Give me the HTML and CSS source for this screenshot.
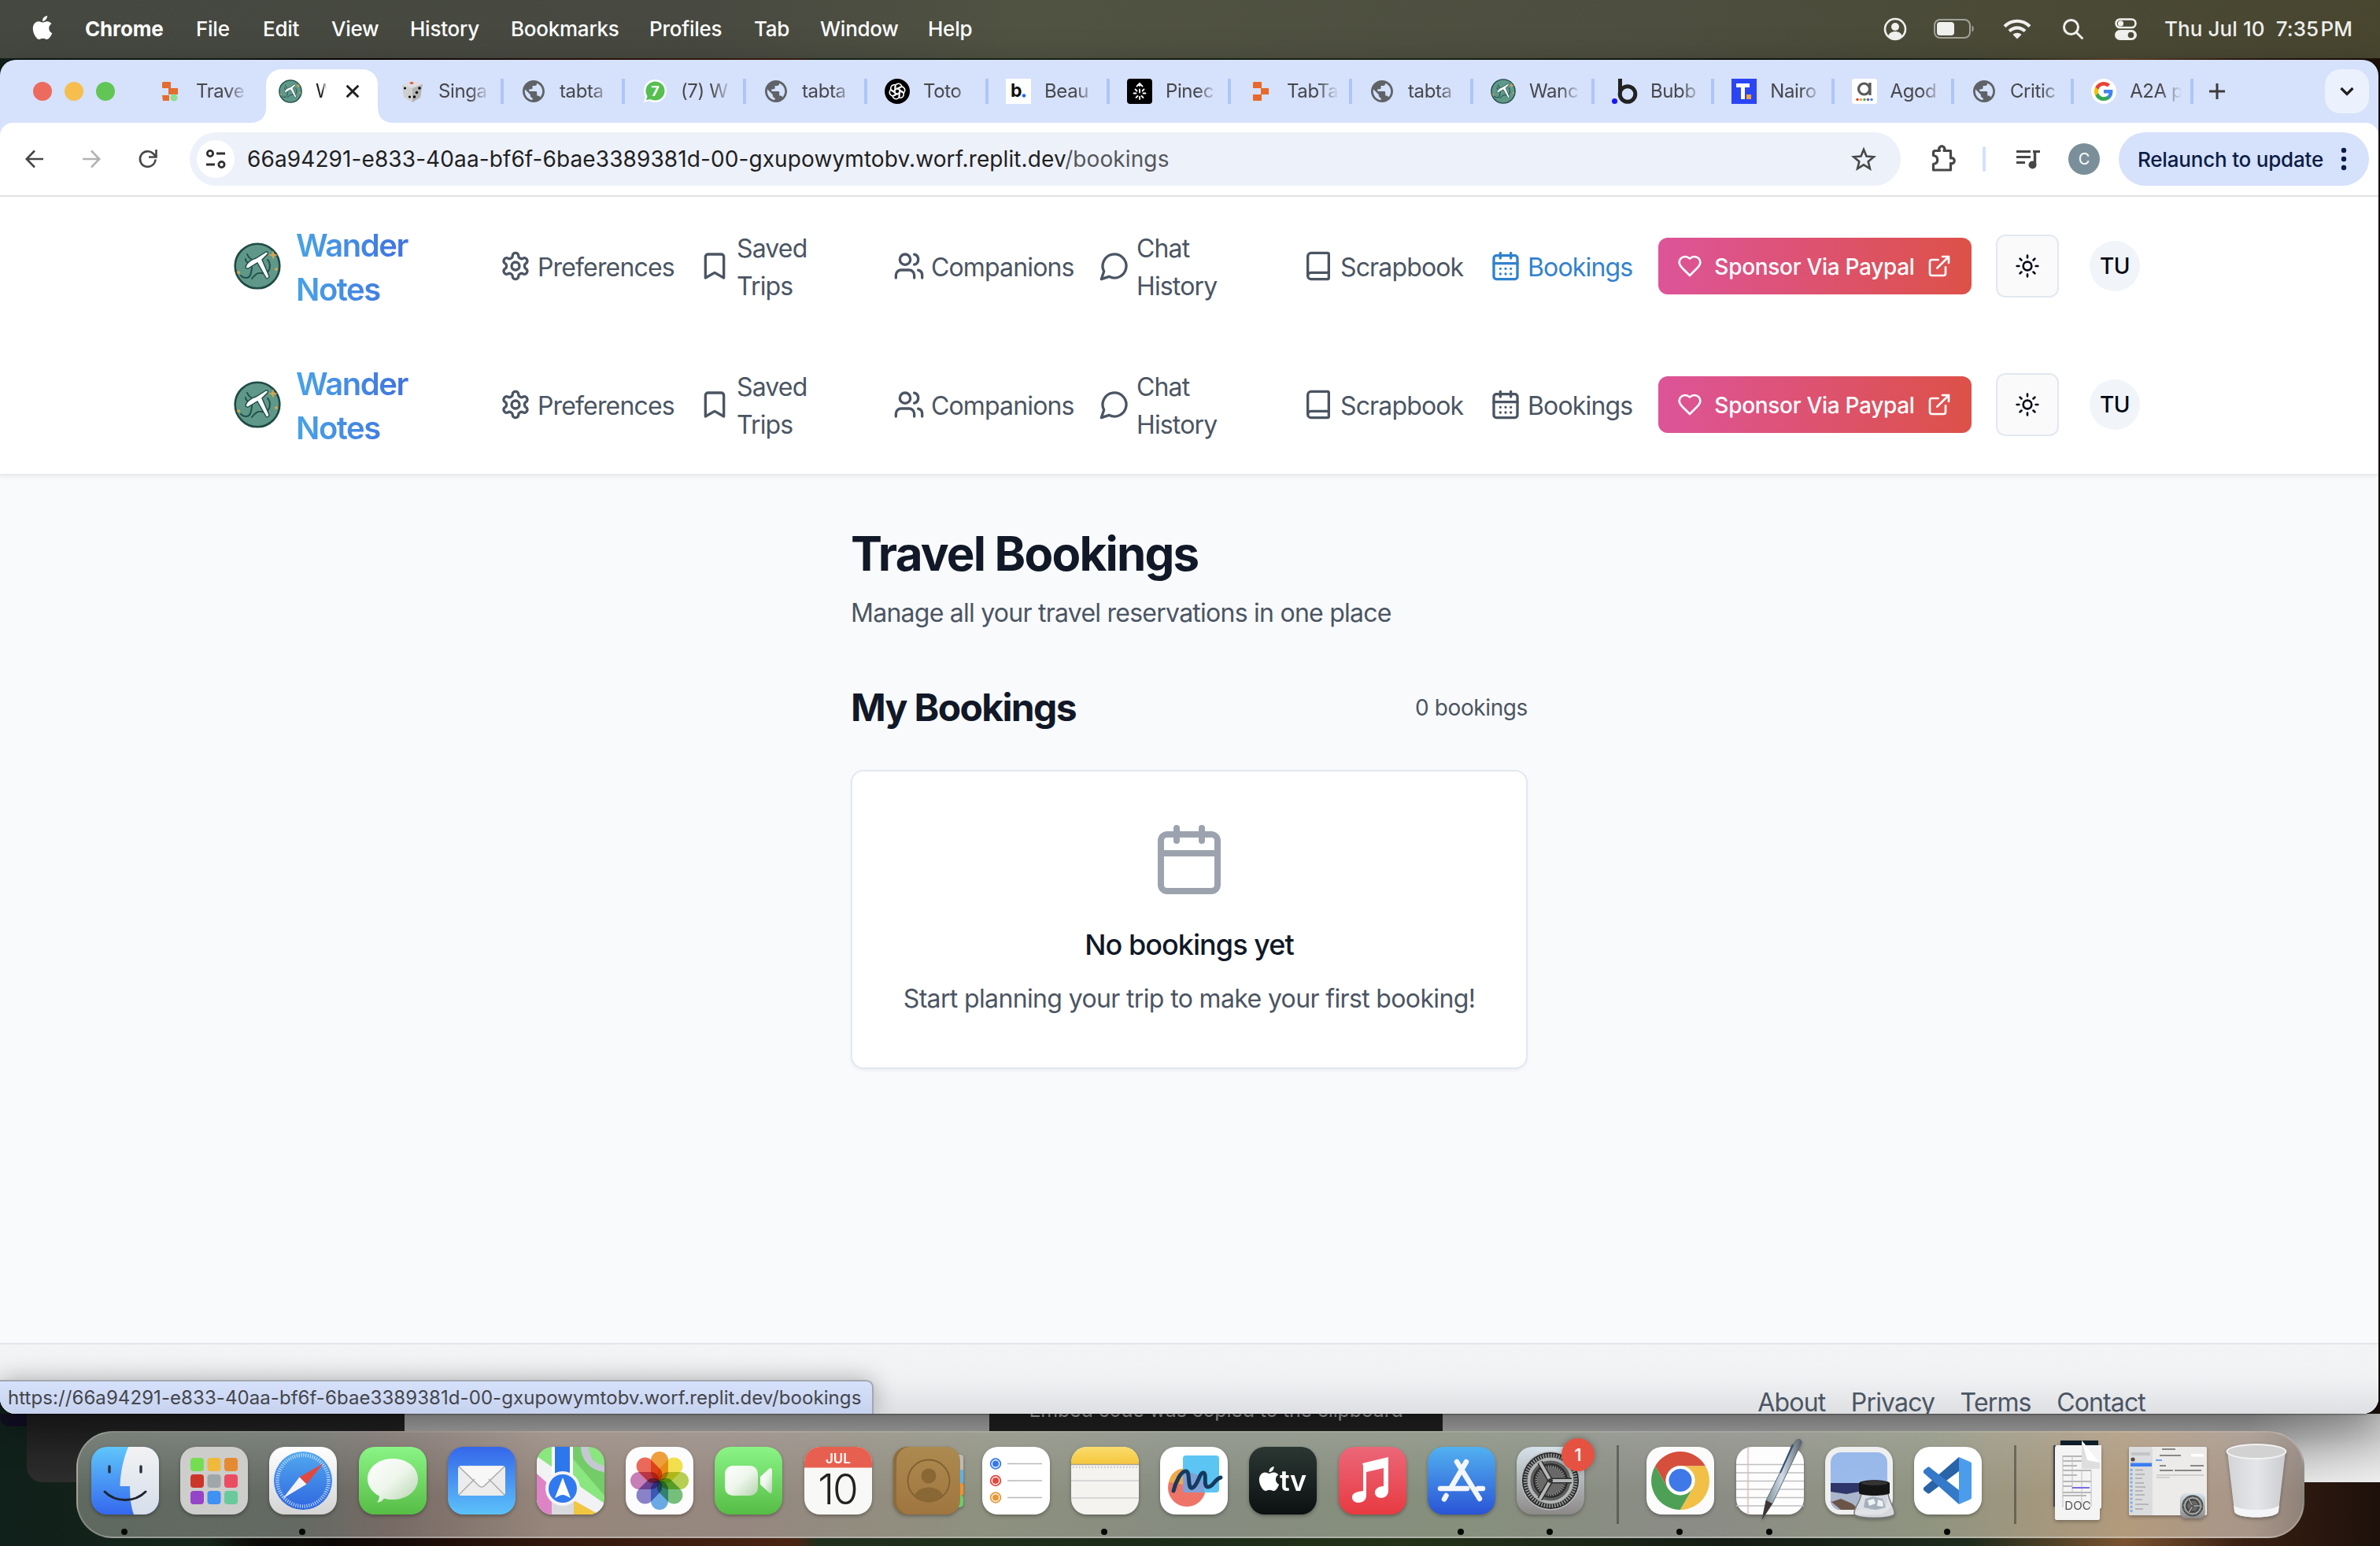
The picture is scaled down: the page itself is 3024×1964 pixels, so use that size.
FILE: index.html
```html
<!DOCTYPE html>
<html lang="en">
<head>
<meta charset="utf-8">
<title>Wander Notes – Bookings</title>
<link rel="stylesheet" href="styles.css">
</head>
<body>
<svg class="defs" width="0" height="0" aria-hidden="true">
  <defs>
    <linearGradient id="g-finder" x1="0" y1="0" x2="0" y2="1"><stop offset="0" stop-color="#5fc6fa"/><stop offset="1" stop-color="#3568ee"/></linearGradient>
    <linearGradient id="g-face" x1="0" y1="0" x2="0" y2="1"><stop offset="0" stop-color="#f2f2f3"/><stop offset="1" stop-color="#d5deeb"/></linearGradient>
    <linearGradient id="g-green" x1="0" y1="0" x2="0" y2="1"><stop offset="0" stop-color="#8af486"/><stop offset="1" stop-color="#56bd45"/></linearGradient>
    <linearGradient id="g-white" x1="0" y1="0" x2="0" y2="1"><stop offset="0" stop-color="#ffffff"/><stop offset="1" stop-color="#d4d4d4"/></linearGradient>
    <linearGradient id="g-bubble" x1="0" y1="0" x2="1" y2="1"><stop offset="0" stop-color="#ffffff"/><stop offset=".5" stop-color="#eef6ec"/><stop offset="1" stop-color="#b5d3ae"/></linearGradient>
    <linearGradient id="g-blue" x1="0" y1="0" x2="0" y2="1"><stop offset="0" stop-color="#52a9ef"/><stop offset="1" stop-color="#2e66e0"/></linearGradient>
    <linearGradient id="g-mail" x1="0" y1="0" x2="0" y2="1"><stop offset="0" stop-color="#3567ea"/><stop offset="1" stop-color="#5cc1fa"/></linearGradient>
    <linearGradient id="g-red" x1="0" y1="0" x2="0" y2="1"><stop offset="0" stop-color="#ec6779"/><stop offset="1" stop-color="#e83a41"/></linearGradient>
    <linearGradient id="g-store" x1="0" y1="0" x2="0" y2="1"><stop offset="0" stop-color="#52b1f0"/><stop offset="1" stop-color="#2a54d6"/></linearGradient>
    <linearGradient id="g-tv" x1="0" y1="0" x2="0" y2="1"><stop offset="0" stop-color="#2b3733"/><stop offset="1" stop-color="#0c1011"/></linearGradient>
    <linearGradient id="g-brown" x1="0" y1="0" x2="0" y2="1"><stop offset="0" stop-color="#ac8a50"/><stop offset="1" stop-color="#a0753f"/></linearGradient>
    <linearGradient id="g-set" x1="0" y1="0" x2="0" y2="1"><stop offset="0" stop-color="#d6e2e9"/><stop offset="1" stop-color="#8d8988"/></linearGradient>
    <linearGradient id="g-note" x1="0" y1="0" x2="0" y2="1"><stop offset="0" stop-color="#f9dc6c"/><stop offset="1" stop-color="#f6c63c"/></linearGradient>
    <linearGradient id="g-sky" x1="0" y1="0" x2="0" y2="1"><stop offset="0" stop-color="#97b8ea"/><stop offset="1" stop-color="#9fbdec"/></linearGradient>
    <linearGradient id="g-trash" x1="0" y1="0" x2="1" y2="0"><stop offset="0" stop-color="#d2d4d7"/><stop offset=".5" stop-color="#e5e6e9"/><stop offset="1" stop-color="#cbccd0"/></linearGradient>
    <linearGradient id="g-pen" x1="0" y1="0" x2="1" y2="0"><stop offset="0" stop-color="#6d7b88"/><stop offset=".5" stop-color="#cfdbe6"/><stop offset="1" stop-color="#59626b"/></linearGradient>
    <clipPath id="tile"><rect width="86" height="86" rx="20"/></clipPath>

    <symbol id="i-apple" viewBox="0 0 24 24"><path fill="currentColor" d="M12.152 6.896c-.948 0-2.415-1.078-3.96-1.04-2.04.027-3.91 1.183-4.961 3.014-2.117 3.675-.546 9.103 1.519 12.09 1.013 1.454 2.208 3.09 3.792 3.039 1.52-.065 2.09-.987 3.935-.987 1.831 0 2.35.987 3.96.948 1.637-.026 2.676-1.48 3.676-2.948 1.156-1.688 1.636-3.325 1.662-3.415-.039-.013-3.182-1.221-3.22-4.857-.026-3.04 2.48-4.494 2.597-4.559-1.429-2.09-3.623-2.324-4.39-2.376-2-.156-3.675 1.09-4.61 1.09zM15.53 3.83c.843-1.012 1.4-2.427 1.245-3.83-1.207.052-2.662.805-3.532 1.818-.78.896-1.454 2.338-1.273 3.714 1.338.104 2.715-.688 3.559-1.701"/></symbol>
    <symbol id="i-globe" viewBox="2 2 20 20"><path fill="#5f6368" d="M12 2C6.48 2 2 6.48 2 12s4.48 10 10 10 10-4.48 10-10S17.52 2 12 2zm-1 17.93c-3.95-.49-7-3.85-7-7.93 0-.62.08-1.21.21-1.79L9 15v1c0 1.1.9 2 2 2v1.93zm6.9-2.54c-.26-.81-1-1.39-1.9-1.39h-1v-3c0-.55-.45-1-1-1H8v-2h2c.55 0 1-.45 1-1V7h2c1.1 0 2-.9 2-2v-.41c2.93 1.19 5 4.06 5 7.41 0 2.08-.8 3.97-2.1 5.39z"/></symbol>
    <symbol id="i-logo" viewBox="0 0 60 60">
      <circle cx="30" cy="30" r="28.3" fill="#5f9888" stroke="#1f4a45" stroke-width="2.6"/>
      <path d="M17 15c1 3 2 4 5 6M15 21c-1 5 9 6 8 12s-2 12-7 12-6-2-7-3M43 22c4 4 4 13-1 16s-9-1-13 2-4 3-6 6" fill="none" stroke="#22504a" stroke-width="2" stroke-linecap="round"/>
      <path d="M15 31c1-4 6-9 13-11l13-8c2-1 3 1 2 3l-7 7 9 21c0 2-3 4-4 2L30 26l-10 6c-2 2-5 1-5-1z" fill="#fff" stroke="#1f4a45" stroke-width="1.4"/>
      <path d="M50 10l1.500 4.500L56 16l-4.500 1.500L50 22l-1.500-4.500L44 16l4.500-1.500z" fill="#d3a553"/>
      <circle cx="54" cy="34" r="2" fill="#d3a553"/><circle cx="6" cy="38" r="2" fill="#d3a553"/>
    </symbol>
    <symbol id="i-settings" viewBox="0 0 24 24"><path d="M12.220 2h-.44a2 2 0 0 0-2 2v.18a2 2 0 0 1-1 1.730l-.43.25a2 2 0 0 1-2 0l-.15-.08a2 2 0 0 0-2.730.73l-.22.38a2 2 0 0 0 .73 2.730l.15.1a2 2 0 0 1 1 1.720v.51a2 2 0 0 1-1 1.740l-.15.09a2 2 0 0 0-.73 2.730l.22.38a2 2 0 0 0 2.730.73l.15-.08a2 2 0 0 1 2 0l.43.25a2 2 0 0 1 1 1.730V20a2 2 0 0 0 2 2h.44a2 2 0 0 0 2-2v-.18a2 2 0 0 1 1-1.730l.43-.25a2 2 0 0 1 2 0l.15.08a2 2 0 0 0 2.730-.73l.22-.39a2 2 0 0 0-.73-2.730l-.15-.08a2 2 0 0 1-1-1.740v-.5a2 2 0 0 1 1-1.740l.15-.09a2 2 0 0 0 .73-2.730l-.22-.38a2 2 0 0 0-2.730-.73l-.15.08a2 2 0 0 1-2 0l-.43-.25a2 2 0 0 1-1-1.730V4a2 2 0 0 0-2-2z"/><circle cx="12" cy="12" r="3"/></symbol>
    <symbol id="i-bookmark" viewBox="0 0 24 24"><path d="M19 21l-7-4-7 4V5a2 2 0 0 1 2-2h10a2 2 0 0 1 2 2v16z"/></symbol>
    <symbol id="i-users" viewBox="0 0 24 24"><path d="M16 21v-2a4 4 0 0 0-4-4H6a4 4 0 0 0-4 4v2"/><circle cx="9" cy="7" r="4"/><path d="M22 21v-2a4 4 0 0 0-3-3.870M16 3.130a4 4 0 0 1 0 7.750"/></symbol>
    <symbol id="i-chat" viewBox="0 0 24 24"><path d="M7.900 20A9 9 0 1 0 4 16.100L2 22Z"/></symbol>
    <symbol id="i-book" viewBox="0 0 24 24"><path d="M4 19.500v-15A2.500 2.500 0 0 1 6.500 2H19a1 1 0 0 1 1 1v18a1 1 0 0 1-1 1H6.500a1 1 0 0 1 0-5H20"/></symbol>
    <symbol id="i-caldays" viewBox="0 0 24 24"><path d="M8 2v4M16 2v4"/><rect width="18" height="18" x="3" y="4" rx="2"/><path d="M3 10h18M8 14h.01M12 14h.01M16 14h.01M8 18h.01M12 18h.01M16 18h.01"/></symbol>
    <symbol id="i-calendar" viewBox="0 0 24 24"><path d="M8 2v4M16 2v4"/><rect width="18" height="18" x="3" y="4" rx="2"/><path d="M3 10h18"/></symbol>
    <symbol id="i-heart" viewBox="0 0 24 24"><path d="M19 14c1.490-1.460 3-3.210 3-5.500A5.500 5.500 0 0 0 16.500 3c-1.760 0-3 .5-4.500 2-1.500-1.500-2.740-2-4.500-2A5.500 5.500 0 0 0 2 8.500c0 2.300 1.500 4.050 3 5.500l7 7Z"/></symbol>
    <symbol id="i-external" viewBox="0 0 24 24"><path d="M15 3h6v6M10 14 21 3M18 13v6a2 2 0 0 1-2 2H5a2 2 0 0 1-2-2V8a2 2 0 0 1 2-2h6"/></symbol>
    <symbol id="i-sun" viewBox="0 0 24 24"><circle cx="12" cy="12" r="4"/><path d="M12 2v2M12 20v2M4.930 4.930l1.410 1.410M17.660 17.660l1.410 1.410M2 12h2M20 12h2M6.340 17.660l-1.410 1.410M19.070 4.930l-1.410 1.410"/></symbol>
    <symbol id="i-gear" viewBox="0 0 86 86">
      <rect width="86" height="86" rx="20" fill="url(#g-set)"/>
      <circle cx="43" cy="43" r="37.500" fill="#b9bdbe"/>
      <circle cx="43" cy="43" r="36" fill="#242424"/>
      <circle cx="43" cy="43" r="32" fill="none" stroke="#9a9c9c" stroke-width="5" stroke-dasharray="1.700 1.650"/>
      <circle cx="43" cy="43" r="27.500" fill="#5d5d5d" stroke="#b4b7b7" stroke-width="4"/>
      <circle cx="43" cy="43" r="19.500" fill="#6b6967" stroke="#2d2d2d" stroke-width="5"/>
      <circle cx="43" cy="43" r="18" fill="none" stroke="#8f9090" stroke-width="3" stroke-dasharray="1.500 1.500"/>
      <path d="M43 43h27M43 43L29.500 19.600M43 43L29.500 66.400" stroke="#2c2c2c" stroke-width="7"/>
      <path d="M43 43h27M43 43L29.500 19.600M43 43L29.500 66.400" stroke="#b6b9b9" stroke-width="4"/>
      <circle cx="43" cy="43" r="3" fill="#333"/>
    </symbol>
  </defs>
</svg>

<div class="desktop">
  <header class="menubar">
    <svg class="apple"><use href="#i-apple"/></svg>
    <nav class="menus">
      <b>Chrome</b><span>File</span><span>Edit</span><span>View</span><span>History</span><span>Bookmarks</span><span>Profiles</span><span>Tab</span><span>Window</span><span>Help</span>
    </nav>
    <div class="status">
      <svg width="30" height="30" viewBox="0 0 30 30"><circle cx="15" cy="15" r="13" fill="none" stroke="#f0f0ee" stroke-width="2.600"/><circle cx="15" cy="12" r="5" fill="#f0f0ee"/><path d="M6 24c2-8 16-8 18 0-4 5-14 5-18 0z" fill="#f0f0ee"/></svg>
      <svg width="52" height="26" viewBox="0 0 52 26"><rect x="1" y="1" width="45" height="23" rx="7" fill="none" stroke="#a2a29a" stroke-width="2"/><rect x="4" y="4" width="22" height="17" rx="4" fill="#f0f0ee"/><path d="M48.500 8.500c3 1 3 7 0 8z" fill="#a2a29a"/></svg>
      <svg width="36" height="26" viewBox="0 0 36 26" fill="none" stroke="#f0f0ee" stroke-width="4.200"><path d="M2 9.500c9-9 23-9 32 0M8 15.500c6-5.500 14-5.500 20 0"/><path d="M12.500 20c3-3 8-3 11 0L18 25.500z" fill="#f0f0ee" stroke="none"/></svg>
      <svg width="28" height="28" viewBox="0 0 28 28" fill="none" stroke="#f0f0ee" stroke-width="3" stroke-linecap="round"><circle cx="11.500" cy="11.500" r="9"/><path d="M18.500 18.500l7 7"/></svg>
      <svg width="28" height="28" viewBox="0 0 28 28"><rect x="1.500" y="1.500" width="25" height="10.500" rx="5.200" fill="none" stroke="#f0f0ee" stroke-width="2.600"/><circle cx="7.500" cy="6.800" r="3.600" fill="#f0f0ee"/><rect y="15" width="28" height="13" rx="6.500" fill="#f0f0ee"/><circle cx="20.500" cy="21.500" r="3.800" fill="#4a4938"/></svg>
      <span class="clock">Thu Jul 10&nbsp; 7:35&#8202;PM</span>
    </div>
  </header>

  <main class="window">
    <div class="tabs">
      <div class="lights"><i class="red"></i><i class="yellow"></i><i class="green"></i></div>
      <div class="tab nosep"><svg viewBox="0 0 32 32"><path d="M7 4h9a1 1 0 0 1 1 1v7h9v8H14v-8H7a1 1 0 0 1-1-1V5zM6 21h9v7H7z" fill="#e46c2c"/><circle cx="21" cy="24" r="4.500" fill="#8bde8d"/></svg><span>Trave</span></div>
      <div class="tab active"><svg class="shape" viewBox="0 0 182 68"><path d="M0 68c14 0 20-8 20-20V20C20 8 28 0 40 0h102c12 0 20 8 20 20v28c0 12 6 20 20 20z" fill="#fff"/></svg><svg viewBox="0 0 60 60"><use href="#i-logo"/></svg><span>W</span><svg class="close" viewBox="0 0 24 24"><path d="M4 4l16 16M20 4L4 20" stroke="#1f1f1f" stroke-width="3.200"/></svg></div>
      <div class="tab"><svg viewBox="0 0 32 32"><path d="M3 8L15 2l14 5-3 17-10 6L5 23z" fill="#dedede"/><path d="M16 12l13-5-3 17-10 6z" fill="#b3b3b3"/><path d="M3 8l13 4v18L5 23z" fill="#cfcfcf"/><ellipse cx="15" cy="5.500" rx="2.600" ry="1.200" fill="#d64b45"/><circle cx="6.500" cy="12" r="1.500"/><circle cx="12.500" cy="23" r="1.500"/><circle cx="25" cy="12" r="1.700"/><circle cx="21.500" cy="17.500" r="1.700"/><circle cx="18.500" cy="23" r="1.700"/></svg><span>Singa</span></div>
      <div class="tab"><svg class="globe"><use href="#i-globe"/></svg><span>tabta</span></div>
      <div class="tab"><svg viewBox="0 0 32 32"><path d="M2 30l2-7A14.500 14.500 0 1 1 9 28z" fill="#fff"/><circle cx="16.500" cy="15.500" r="12" fill="#55bf51"/><path d="M5 27l2-6 4 5z" fill="#55bf51"/><text x="16.500" y="22" font-size="18" font-weight="700" fill="#fff" text-anchor="middle">7</text></svg><span>(7) W</span></div>
      <div class="tab"><svg class="globe"><use href="#i-globe"/></svg><span>tabta</span></div>
      <div class="tab"><svg viewBox="0 0 32 32"><circle cx="16" cy="16" r="16"/><g fill="none" stroke="#fff" stroke-width="1.500"><path id="petal" d="M13 19v-8.500a4.500 4.500 0 0 1 8-2.500l1 2-6 3.500"/><use href="#petal" transform="rotate(60 16 16)"/><use href="#petal" transform="rotate(120 16 16)"/><use href="#petal" transform="rotate(180 16 16)"/><use href="#petal" transform="rotate(240 16 16)"/><use href="#petal" transform="rotate(300 16 16)"/></g></svg><span>Toto</span></div>
      <div class="tab"><svg viewBox="0 0 32 32"><rect width="32" height="32" fill="#fff"/><text x="6" y="23" font-size="23" font-weight="700" fill="#111">b</text><circle cx="23" cy="21.500" r="2.300" fill="#1f6cf0"/></svg><span>Beau</span></div>
      <div class="tab"><svg viewBox="0 0 32 32"><rect width="32" height="32" rx="4"/><g stroke="#fff" stroke-width="1.800" fill="none" stroke-linecap="round"><path d="M16 6v3M12.500 9.500L16 6l3.500 3.500M16 13.500v4M16 23v3M10.500 13.500l2 2M21.500 13.500l-2 2M8.500 18.500h3M23.500 18.500h-3M11.500 24l2-2M20.500 24l-2-2"/></g></svg><span>Pinec</span></div>
      <div class="tab"><svg viewBox="0 0 32 32"><path d="M7 4h9a1 1 0 0 1 1 1v7h9v8H17v7a1 1 0 0 1-1 1H7a1 1 0 0 1-1-1v-7h10v-8H6V5z" fill="#e8692b"/></svg><span>TabTa</span></div>
      <div class="tab"><svg class="globe"><use href="#i-globe"/></svg><span>tabta</span></div>
      <div class="tab"><svg viewBox="0 0 60 60"><use href="#i-logo"/></svg><span>Wanc</span></div>
      <div class="tab slim"><svg viewBox="0 0 32 32"><circle cx="3.500" cy="28.500" r="3.500" fill="#1717f5"/><path d="M10.500 0v19" stroke="#222" stroke-width="5"/><circle cx="20" cy="19.500" r="9.800" fill="none" stroke="#222" stroke-width="5"/></svg><span>Bubb</span></div>
      <div class="tab slim"><svg viewBox="0 0 32 32"><rect width="32" height="32" fill="#2b45f5"/><path d="M6 6h17v5h-6v15h-5V11H6z" fill="#fff"/><rect x="19" y="20" width="6" height="6" fill="#f0a63c"/></svg><span>Nairo</span></div>
      <div class="tab slim"><svg viewBox="0 0 32 32"><rect width="32" height="32" rx="3" fill="#fff"/><circle cx="15.500" cy="13" r="7" fill="none" stroke="#5a5a5c" stroke-width="3.200"/><path d="M23 5v16" stroke="#5a5a5c" stroke-width="3.200"/><g><circle cx="7" cy="26.500" r="1.700" fill="#e0403c"/><circle cx="11.500" cy="26.500" r="1.700" fill="#efa83a"/><circle cx="16" cy="26.500" r="1.700" fill="#48a94f"/><circle cx="20.500" cy="26.500" r="1.700" fill="#8a4a9c"/><circle cx="25" cy="26.500" r="1.700" fill="#3b8fd6"/></g></svg><span>Agod</span></div>
      <div class="tab slim"><svg class="globe"><use href="#i-globe"/></svg><span>Critic</span></div>
      <div class="tab slim"><svg viewBox="-4 -4 32 32"><circle cx="12" cy="12" r="16" fill="#fff"/><path fill="#4285f4" d="M23.500 12.300c0-.8-.1-1.600-.2-2.300H12v4.500h6.500a5.500 5.500 0 0 1-2.400 3.600v3h3.900c2.200-2.100 3.500-5.200 3.500-8.800z"/><path fill="#34a853" d="M12 24c3.200 0 6-1.100 8-2.900l-3.900-3c-1.100.7-2.500 1.200-4.100 1.200-3.100 0-5.800-2.100-6.700-5H1.300v3.100A12 12 0 0 0 12 24z"/><path fill="#fbbc05" d="M5.300 14.300a7.200 7.200 0 0 1 0-4.600V6.600h-4a12 12 0 0 0 0 10.800z"/><path fill="#ea4335" d="M12 4.800c1.800 0 3.300.6 4.600 1.800l3.400-3.400A12 12 0 0 0 1.300 6.600l4 3.100c.9-2.900 3.600-4.900 6.700-4.900z"/></svg><span>A2A p</span></div>
      <svg class="plus" viewBox="0 0 24 24"><path d="M12 2v20M2 12h20" stroke="#3c3c3c" stroke-width="3"/></svg>
      <button class="chev" aria-label="Search tabs"><svg width="20" height="14" viewBox="0 0 20 14"><path d="M2.500 3l7.500 7.500L17.500 3" fill="none" stroke="#1f1f1f" stroke-width="3.200"/></svg></button>
    </div>

    <div class="toolbar">
      <svg class="nav" viewBox="0 0 24 24"><path d="M23 12H2M12 1.500L1.800 12 12 22.500" fill="none" stroke="#474747" stroke-width="2.600"/></svg>
      <svg class="nav" viewBox="0 0 24 24"><path d="M1 12h21M12 1.500L22.200 12 12 22.500" fill="none" stroke="#b3b3b3" stroke-width="2.600"/></svg>
      <svg class="nav" viewBox="0 0 24 24"><path d="M21.500 12.500a9.800 9.800 0 1 1-3-7.500l4 4" fill="none" stroke="#474747" stroke-width="2.600"/><path d="M22.500 0v9.500H13" fill="none" stroke="#474747" stroke-width="2.600"/></svg>
      <div class="omnibox">
        <span class="tune"><svg width="26" height="26" viewBox="0 0 26 26" fill="none" stroke="#303030" stroke-width="2.800"><circle cx="6" cy="6" r="3.600"/><path d="M14 6h11M1 20h11"/><circle cx="20.500" cy="20" r="3.600"/></svg></span>
        <span class="url">66a94291-e833-40aa-bf6f-6bae3389381d-00-gxupowymtobv.worf.replit.dev<em>/bookings</em></span>
        <svg class="star" viewBox="0 0 30 30"><path d="M15 3l3.500 8.600 9.300.7-7.100 6 2.200 9-7.900-4.900-7.900 4.900 2.200-9-7.100-6 9.300-.7z" fill="none" stroke="#474747" stroke-width="2.600"/></svg>
      </div>
      <svg class="puzzle" viewBox="0 0 34 34"><path d="M6 6.500h6.500a3.500 3.500 0 1 1 5.500 0h8.500v9.500a3.500 3.500 0 1 1 0 6.500v8.500h-22v-7.500c7-1 7-10 0-11V8z" fill="none" stroke="#474747" stroke-width="3.200" stroke-linejoin="round"/></svg>
      <i class="vsep"></i>
      <svg class="queue" viewBox="0 0 32 26"><path d="M1 3.500h18M1 10.500h18M1 17.500h11M22 3.500h9" stroke="#474747" stroke-width="3.200"/><path d="M24.500 2v18" stroke="#474747" stroke-width="3.400"/><circle cx="21.500" cy="20.500" r="5" fill="#474747"/></svg>
      <span class="avatar">C</span>
      <button class="relaunch"><span>Relaunch to update</span><svg width="8" height="30" viewBox="0 0 8 30" fill="#0a1c47"><circle cx="4" cy="4" r="3.200"/><circle cx="4" cy="15" r="3.200"/><circle cx="4" cy="26" r="3.200"/></svg></button>
    </div>

    <section class="page">
      <div class="headers">
        <header class="app-header">
          <svg class="logo"><use href="#i-logo"/></svg>
          <h2 class="brand">Wander<br>Notes</h2>
          <a class="link"><svg><use href="#i-settings"/></svg><span>Preferences</span></a>
          <a class="link"><svg><use href="#i-bookmark"/></svg><span>Saved<br>Trips</span></a>
          <a class="link"><svg><use href="#i-users"/></svg><span>Companions</span></a>
          <a class="link"><svg><use href="#i-chat"/></svg><span>Chat<br>History</span></a>
          <a class="link"><svg><use href="#i-book"/></svg><span>Scrapbook</span></a>
          <a class="link current"><svg><use href="#i-caldays"/></svg><span>Bookings</span></a>
          <a class="sponsor"><svg><use href="#i-heart"/></svg><span>Sponsor Via Paypal</span><svg><use href="#i-external"/></svg></a>
          <button class="theme" aria-label="Theme"><svg><use href="#i-sun"/></svg></button>
          <span class="user">TU</span>
        </header>
        <header class="app-header">
          <svg class="logo"><use href="#i-logo"/></svg>
          <h2 class="brand">Wander<br>Notes</h2>
          <a class="link"><svg><use href="#i-settings"/></svg><span>Preferences</span></a>
          <a class="link"><svg><use href="#i-bookmark"/></svg><span>Saved<br>Trips</span></a>
          <a class="link"><svg><use href="#i-users"/></svg><span>Companions</span></a>
          <a class="link"><svg><use href="#i-chat"/></svg><span>Chat<br>History</span></a>
          <a class="link"><svg><use href="#i-book"/></svg><span>Scrapbook</span></a>
          <a class="link"><svg><use href="#i-caldays"/></svg><span>Bookings</span></a>
          <a class="sponsor"><svg><use href="#i-heart"/></svg><span>Sponsor Via Paypal</span><svg><use href="#i-external"/></svg></a>
          <button class="theme" aria-label="Theme"><svg><use href="#i-sun"/></svg></button>
          <span class="user">TU</span>
        </header>
      </div>
      <div class="content">
        <h1>Travel Bookings</h1>
        <p class="sub">Manage all your travel reservations in one place</p>
        <div class="section-head"><h2>My Bookings</h2><span>0 bookings</span></div>
        <div class="card">
          <svg class="cal"><use href="#i-calendar"/></svg>
          <h3>No bookings yet</h3>
          <p>Start planning your trip to make your first booking!</p>
        </div>
      </div>
      <footer class="foot"><a>About</a><a>Privacy</a><a>Terms</a><a>Contact</a></footer>
    </section>
    <div class="bubble">https://66a94291-e833-40aa-bf6f-6bae3389381d-00-gxupowymtobv.worf.replit.dev/bookings</div>
  </main>

  <div class="behind">
    <div class="win-edge"></div>
    <div class="win-dark"></div>
    <div class="win-gray"><div class="toast"><span>Embed code was copied to the clipboard</span></div></div>
  </div>

  <div class="dock">
    <div class="app on"><svg viewBox="0 0 86 86"><g clip-path="url(#tile)"><rect width="86" height="86" fill="url(#g-finder)"/><path d="M47 0C41 14 37 32 36.500 50H49c0 12 1 25 5 36h32V0z" fill="url(#g-face)"/></g><path d="M23 25v7M63 25v7" stroke="#27303c" stroke-width="3.400" stroke-linecap="round"/><path d="M17 57c14 14 38 14 52 0" fill="none" stroke="#1d232c" stroke-width="3" stroke-linecap="round"/></svg></div>
    <div class="app"><svg viewBox="0 0 86 86"><rect width="86" height="86" rx="20" fill="#cdcdcb"/><rect x="13" y="14" width="17" height="17" rx="4" fill="#74dd52"/><rect x="34.500" y="14" width="17" height="17" rx="4" fill="#f1b93c"/><rect x="56" y="14" width="17" height="17" rx="4" fill="#e58a31"/><rect x="13" y="35" width="17" height="17" rx="4" fill="#cc3629"/><rect x="34.500" y="35" width="17" height="17" rx="4" fill="#a0a7aa"/><rect x="56" y="35" width="17" height="17" rx="4" fill="#ea4d62"/><rect x="13" y="56" width="17" height="17" rx="4" fill="#9544c8"/><rect x="34.500" y="56" width="17" height="17" rx="4" fill="#3f91f3"/><rect x="56" y="56" width="17" height="17" rx="4" fill="#68c99d"/></svg></div>
    <div class="app on"><svg viewBox="0 0 86 86"><rect width="86" height="86" rx="20" fill="url(#g-white)"/><circle cx="43" cy="43" r="37" fill="url(#g-blue)"/><circle cx="43" cy="43" r="32.500" fill="none" stroke="#cfe3f8" stroke-width="4.500" stroke-dasharray="1 1.840"/><path d="M69 21L38.500 38.500l9 9z" fill="#e3483d"/><path d="M17.500 65.500L38.500 38.500l9 9z" fill="#f4f4f4"/></svg></div>
    <div class="app"><svg viewBox="0 0 86 86"><rect width="86" height="86" rx="20" fill="url(#g-green)"/><path d="M43 15c18 0 32 11 32 26S61 67 43 67c-4 0-8-.5-11-1.500-2 3-5 5-9 5 2-2 3-5 3-8C17 58 11 50 11 41c0-15 14-26 32-26z" fill="url(#g-bubble)"/></svg></div>
    <div class="app"><svg viewBox="0 0 86 86"><rect width="86" height="86" rx="20" fill="url(#g-mail)"/><rect x="13" y="24" width="60" height="38" rx="4" fill="#ececec"/><path d="M14 61l20-20M72 61L52 41M14 25l25 24c3 3 5 3 8 0l25-24" fill="#f7f7f7" stroke="#a9a9a9" stroke-width="1.400"/></svg></div>
    <div class="app"><svg viewBox="0 0 86 86"><g clip-path="url(#tile)"><rect width="86" height="86" fill="#8ae67e"/><path d="M0 12l86 60v14H0z" fill="#f2f2f4"/><path d="M0 34v52h20V52z" fill="#de84c6"/><path d="M19 60h28v26H19z" fill="#d9dadd"/><path d="M47 68l32 18H47z" fill="#f3c642"/><path d="M45 14L86 62V34L60 0H45z" fill="#74cc69"/><path d="M56 0c0 16 12 30 30 32V24C74 22 66 12 66 0z" fill="#c5c7d2"/><path d="M19 0h27v60H19z" fill="#fff"/><path d="M23 0h19v60H23z" fill="#2d77ec"/></g><circle cx="33" cy="53" r="22" fill="#f4f4f6"/><circle cx="33" cy="53" r="18" fill="#3179ef"/><path d="M33 39l10 26c-3-1-6-4-10-4s-7 3-10 4z" fill="#fff"/></svg></div>
    <div class="app"><svg viewBox="0 0 86 86"><rect width="86" height="86" rx="20" fill="#fcfcfc"/><g class="petals"><rect x="32" y="6" width="22" height="37" rx="11" fill="#f2a03d"/><rect x="32" y="6" width="22" height="37" rx="11" fill="#f4e24e" transform="rotate(45 43 43)"/><rect x="32" y="6" width="22" height="37" rx="11" fill="#b8d152" transform="rotate(90 43 43)"/><rect x="32" y="6" width="22" height="37" rx="11" fill="#77c27c" transform="rotate(135 43 43)"/><rect x="32" y="6" width="22" height="37" rx="11" fill="#6cabe8" transform="rotate(180 43 43)"/><rect x="32" y="6" width="22" height="37" rx="11" fill="#8b84cc" transform="rotate(225 43 43)"/><rect x="32" y="6" width="22" height="37" rx="11" fill="#cb80b8" transform="rotate(270 43 43)"/><rect x="32" y="6" width="22" height="37" rx="11" fill="#ed6a5c" transform="rotate(315 43 43)"/></g></svg></div>
    <div class="app"><svg viewBox="0 0 86 86"><rect width="86" height="86" rx="20" fill="url(#g-green)"/><rect x="13" y="24" width="42" height="38" rx="10" fill="url(#g-bubble)"/><path d="M58 38l11-10c2-2 4-1 4 2v26c0 3-2 4-4 2L58 48z" fill="url(#g-bubble)"/></svg></div>
    <div class="app"><svg viewBox="0 0 86 86"><rect width="86" height="86" rx="20" fill="#f8f8f6"/><path d="M0 26.500V20A20 20 0 0 1 20 0h46a20 20 0 0 1 20 20v6.500z" fill="#e7604f"/><text x="43" y="20.500" font-size="17" font-weight="600" fill="#fff" text-anchor="middle">JUL</text><text x="42" y="73" font-size="53" font-weight="300" letter-spacing="-2" fill="#222" text-anchor="middle">10</text></svg></div>
    <div class="app"><svg viewBox="0 0 86 86"><rect x="70" y="10" width="19" height="22" rx="4" fill="#bcbcb8"/><rect x="70" y="29" width="19" height="18" rx="3" fill="#58b4f0"/><rect x="70" y="46" width="19" height="16" rx="3" fill="#f0932f"/><rect x="70" y="61" width="19" height="16" rx="5" fill="#66d06a"/><rect width="84" height="86" rx="18" fill="#8d6c3a"/><rect x="4" width="81" height="86" rx="18" fill="url(#g-brown)"/><circle cx="45" cy="43" r="26.500" fill="none" stroke="#7f602f" stroke-width="1.800"/><circle cx="45" cy="37" r="9.500" fill="#8a6835"/><path d="M27 62c5-14 31-14 36 0-10 10-26 10-36 0z" fill="#8a6835"/></svg></div>
    <div class="app"><svg viewBox="0 0 86 86"><rect width="86" height="86" rx="20" fill="#fff"/><path d="M32 21.500h44M32 43h44M32 64.500h44" stroke="#b9b9bd" stroke-width="1.600"/><g fill="none" stroke-width="1.800"><circle cx="17" cy="21.500" r="6.300" stroke="#3478f0"/><circle cx="17" cy="43" r="6.300" stroke="#e3483d"/><circle cx="17" cy="64.500" r="6.300" stroke="#e89634"/></g><circle cx="17" cy="21.500" r="4" fill="#3478f0"/><circle cx="17" cy="43" r="4" fill="#e3483d"/><circle cx="17" cy="64.500" r="4" fill="#e89634"/></svg></div>
    <div class="app on"><svg viewBox="0 0 86 86"><rect width="86" height="86" rx="20" fill="#f4f3f0"/><path d="M0 22v-2A20 20 0 0 1 20 0h46a20 20 0 0 1 20 20v2z" fill="url(#g-note)"/><path d="M0 22.500h86" stroke="#a9a290" stroke-width="1.500"/><path d="M2 26h84" stroke="#c6c4be" stroke-width="2" stroke-dasharray="1.500 2.500"/><path d="M0 43h86M0 65h86" stroke="#cfced0" stroke-width="1.500"/></svg></div>
    <div class="app"><svg viewBox="0 0 86 86"><rect width="86" height="86" rx="20" fill="#fff"/><circle cx="34" cy="52" r="24" fill="#ee7467"/><path d="M11 45c3-14 14-19 25-17l-6 20z" fill="#f2a94a"/><rect x="29" y="11" width="46" height="47" rx="4" fill="#5cc5f3"/><path d="M29 35c16-6 29 5 27 23H33a4 4 0 0 1-4-4z" fill="#80a0d8"/><path d="M17 56c3-12 10-26 16-25s1 23 8 21 9-20 14-19-1 18 6 18 8-10 16-12" fill="none" stroke="#153a5e" stroke-width="5" stroke-linecap="round"/></svg></div>
    <div class="app"><svg viewBox="0 0 86 86"><rect width="86" height="86" rx="20" fill="url(#g-tv)"/><svg x="10" y="25" width="31" height="31" color="#fff"><use href="#i-apple"/></svg><text x="39" y="56" font-size="36" font-weight="600" fill="#fff" letter-spacing="-.5">tv</text></svg></div>
    <div class="app"><svg viewBox="0 0 86 86"><rect width="86" height="86" rx="20" fill="url(#g-red)"/><path d="M30 21l33-8v43c0 5-4 9-9 9s-8-3-8-7 4-8 11-8V27l-22 5v30c0 5-4 9-10 9-5 0-8-3-8-7 0-5 5-7 14-8V24z" fill="#fff"/></svg></div>
    <div class="app on"><svg viewBox="0 0 86 86"><rect width="86" height="86" rx="20" fill="url(#g-store)"/><g stroke="#f3f6fb" stroke-width="6.500" stroke-linecap="round"><path d="M49 19L29 53M37 19l29 47M23.500 62l-2.500 4.500M16 53h34M64 53h6"/></g></svg></div>
    <div class="app on"><svg viewBox="0 0 86 86"><use href="#i-gear"/></svg><b class="badge">1</b></div>
    <i class="dsep"></i>
    <div class="app on"><svg viewBox="0 0 86 86"><rect width="86" height="86" rx="20" fill="#fbfbfb"/><path d="M11 24.500A37 37 0 0 1 75 24.500H43A18.500 18.500 0 0 0 27 52.200z" fill="#d64e3c"/><path d="M11 24.500A37 37 0 0 0 43 80L59 52.200A18.500 18.500 0 0 1 27 52.200z" fill="#4fa057"/><path d="M75 24.500A37 37 0 0 1 43 80L59 52.200A18.500 18.500 0 0 0 43 24.500z" fill="#f2bf47"/><circle cx="43" cy="42.500" r="18.500" fill="#fff"/><circle cx="43" cy="42.500" r="14.500" fill="#3f78e8"/></svg></div>
    <div class="app on"><svg viewBox="0 0 86 86"><rect width="86" height="86" rx="20" fill="#fdfdfd"/><path d="M15 0v86" stroke="#efb9b9" stroke-width="1.500"/><path d="M0 22.500h86M0 33h86M0 43.500h86M0 54h86M0 64.500h86M0 75h86" stroke="#c0c0c2" stroke-width="1.500"/><path d="M76-8c3-3 8-1 7 3L46 72l-13 20 5-24z" fill="url(#g-pen)" stroke="#5b6770" stroke-width="1"/><path d="M72-3L56 33" stroke="#33506c" stroke-width="2"/><path d="M46 72l-13 20 5-24z" fill="#3d3433"/></svg></div>
    <div class="app"><svg viewBox="0 0 86 86"><rect width="86" height="86" rx="20" fill="#efeff0"/><rect x="7" y="7" width="72" height="73" rx="13" fill="url(#g-sky)"/><path d="M7 46h72v21a13 13 0 0 1-13 13H20A13 13 0 0 1 7 67z" fill="#2d3569"/><path d="M7 57l20 3 20-4 10 8v16H20A13 13 0 0 1 7 67z" fill="#aab6cb"/><path d="M8 70l12-4 14 6 10 8H20z" fill="#6b5549"/><path d="M46 59h34c1 12 9 18 8 26-1 7-50 7-51 0-1-8 8-14 9-26z" fill="#dfe2e6" fill-opacity=".92" stroke="#76797f" stroke-width="1.500"/><path d="M51 66l10-3 12 3 4 11-13 3-15-3z" fill="#a5afba"/><path d="M54 68l8-2 2 6-8 3zM67 67l6 2 1 7-8-1z" fill="#eef2f6"/><path d="M43 46c4-5 35-5 39 0v13c-4 4-35 4-39 0z" fill="#151515"/><ellipse cx="62.500" cy="46" rx="17" ry="3" fill="#343434"/></svg></div>
    <div class="app on"><svg viewBox="0 0 86 86"><rect width="86" height="86" rx="20" fill="#fff"/><path d="M57 13L12 52v3l5 4c2 1 3 0 4-1l36-27z" fill="#2963a8"/><path d="M57 73L12 33v-3l5-4c2-1 3 0 4 1l36 28z" fill="#347ac8"/><path d="M57 13l14 6c2 1 2 2 2 3v42c0 1 0 2-2 3l-14 6z" fill="#4c9cec"/></svg></div>
    <i class="dsep"></i>
    <div class="app"><svg viewBox="0 0 86 86"><rect x="21" y="-8" width="48" height="12" fill="#0e1d28"/><path d="M12-2h61v78H12z" fill="#3d4348"/><path d="M14 3c0-4 1-5 3-5h56v79l-2 2v12c0 1-1 2-2 2H16c-1 0-2-1-2-2z" fill="#f4f4f4"/><path d="M24 12h36M24 18h36M24 24h18M24 30h36M24 36h18M24 44h36M24 50h12M24 58h36M24 62h30" stroke="#a2a2a2" stroke-width="1.500"/><path d="M24 11v66M36 11v46M48 30v46M60 30v46" stroke="#bdbdbd"/><path d="M36 52h22" stroke="#746ee0" stroke-width="2"/><path d="M48-8l23 28v8H48z" fill="#dedede"/><path d="M48-8l23 28-16-3z" fill="#fff"/><text x="43" y="80" font-size="15" fill="#555" text-anchor="middle">DOC</text></svg></div>
    <div class="app"><svg viewBox="0 0 86 86"><rect x="-6" width="99" height="87" rx="2" fill="#ecebea"/><rect x="-6" width="30" height="87" rx="2" fill="#dbdcdd"/><rect x="-4" y="20.500" width="27" height="4.500" fill="#3b7df2"/><path d="M-3 9h24" stroke="#c3c4c6" stroke-width="4"/><path d="M-3 28v56" stroke="#7db0ef" stroke-width="3" stroke-dasharray="3 2.200"/><path d="M2 29.500h10M2 35h12M2 40h9M2 46h11M2 51h13M2 56h10M2 61h12M2 67h9M2 73h17M2 79h10" stroke="#aaa" stroke-width="1.400"/><circle cx="-1" cy="16" r="2.600" fill="#5a4a44"/><path d="M36 3h17M33 11h27M33 24h8M33 30h17M72 24h17M52 30h34" stroke="#888" stroke-width="2"/><path d="M29 36h60M29 39h17" stroke="#b5b5b5" stroke-width="1.200"/><path d="M28 17h8" stroke="#4a86f0" stroke-width="1.500"/><rect x="73" y="9" width="16" height="3.500" fill="#fff"/><svg x="59" y="59" width="32" height="32"><use href="#i-gear"/></svg></svg></div>
    <div class="app"><svg viewBox="0 0 86 86"><path d="M6 6l9 76c1 10 55 10 56 0l9-76z" fill="url(#g-trash)"/><path d="M14 74c6 8 52 8 58 0l-1 8c-1 10-55 10-56 0z" fill="#f4f5f6"/><ellipse cx="43" cy="6" rx="37.500" ry="9" fill="#d3d2d2" stroke="#f3f3f4" stroke-width="2"/></svg></div>
  </div>
</div>
</body>
</html>
```
FILE: styles.css
```css
* { box-sizing: border-box; }
body, h1, h2, h3, p { margin: 0; }
body { font-family: Inter, "Liberation Sans", sans-serif; -webkit-font-smoothing: antialiased; }
button { border: 0; padding: 0; font: inherit; }
svg { display: block; flex: none; overflow: visible; }
.defs { position: absolute; }
em { font-style: normal; }

.desktop {
  position: relative;
  width: 3024px;
  height: 1964px;
  overflow: hidden;
  background:
    radial-gradient(circle 80px at 340px 1964px, #0a0806, transparent),
    linear-gradient(90deg, #10201a 0, #16251a 280px, #0b0605 420px, #32170c 700px, #4a2413 1010px, #1f2f1c 1040px, #1c2b18 1500px, #243219 1780px, #141b14 2200px, #1d2a1c 2500px, #7a5330 2700px, #3a2013 2850px, #1d100b 3024px);
}

/* menu bar */
.menubar {
  height: 74px;
  display: flex;
  align-items: center;
  padding: 0 33px 0 40px;
  color: #fff;
  font-size: 26px;
  font-weight: 500;
  background: linear-gradient(90deg, #454840 0, #484a41 900px, #505242 1300px, #4d4e3f 2100px, #48462f 3024px);
}
.apple { width: 30px; height: 30px; margin: -4px 0 0 -1px; }
.menus {
  flex: 1;
  display: grid;
  grid-template-columns: 141px 85px 87px 100px 128px 176px 133px 84px 137px 70px;
  margin-left: 39px;
  margin-top: -1px;
  white-space: nowrap;
  letter-spacing: -.25px;
}
.menus b { font-weight: 700; letter-spacing: -.15px; }
.status { display: flex; align-items: center; gap: 39px; color: #f0f0ee; }
.status svg:nth-child(2) { margin-left: -5px; }
.status svg:nth-child(3) { margin-left: -3px; }
.clock { margin: -1px 0 0 -4px; white-space: nowrap; letter-spacing: .08px; width: 241px; }

/* browser window */
.window {
  position: relative;
  z-index: 1;
  width: 3022px;
  height: 1720px;
  margin-top: 2px;
  display: flex;
  flex-direction: column;
  border-radius: 20px;
  overflow: hidden;
  background: #d6e1fb;
  box-shadow: 0 0 2px 1px rgba(0, 0, 0, .4), 0 16px 50px rgba(0, 0, 0, .35);
}
.tabs { height: 80px; display: flex; align-items: center; flex: none; position: relative; }
.lights { width: 178px; padding-left: 42px; display: flex; gap: 16px; }
.lights i { width: 24px; height: 24px; border-radius: 50%; }
.red { background: #ed6a5f; }
.yellow { background: #f5be4f; }
.green { background: #61c655; }
.tab {
  position: relative;
  width: 154px;
  height: 32px;
  flex: none;
  display: flex;
  align-items: center;
  gap: 17px;
  padding-left: 22px;
  border-right: 4px solid #adc6f7;
}
.tab.slim { width: 152.300px; }
.tab.nosep, .tab.active { border-right-color: transparent; }
.tab > svg { width: 32px; height: 32px; }
.tab > svg.globe { width: 28px; height: 28px; margin: 0 2px; }
.tab span {
  width: 66px;
  margin-right: -8px;
  white-space: nowrap;
  font-size: 24px;
  line-height: 32px;
  letter-spacing: -.4px;
  color: #46484c;
  -webkit-mask-image: linear-gradient(90deg, #000 60%, transparent 100%);
  mask-image: linear-gradient(90deg, #000 60%, transparent 100%);
}
.tab.active > svg { position: relative; width: 30px; height: 30px; }
.tab.active > .shape { position: absolute; left: -14px; top: -12px; width: 182px; height: 68px; }
.tab.active span { position: relative; width: 14px; margin-right: 0; color: #1f1f1f; }
.tab.active > .close { width: 22px; height: 22px; margin-left: 5px; }
.plus { width: 24px; height: 24px; margin-left: 18px; }
.chev { margin: 0 12px 0 auto; width: 56px; height: 56px; border-radius: 20px; background: #ecf2fd; display: grid; place-items: center; }

.toolbar {
  height: 94px;
  flex: none;
  display: flex;
  align-items: center;
  padding: 0 12px 0 32px;
  background: #fff;
  border-bottom: 2px solid #e2e2e2;
  border-radius: 16px 16px 0 0;
}
.nav { width: 24px; height: 24px; margin-right: 48px; }
.omnibox {
  width: 2174px;
  height: 68px;
  margin-left: -7px;
  display: flex;
  align-items: center;
  padding: 0 32px 0 9px;
  border-radius: 34px;
  background: #edf1fa;
}
.tune { width: 48px; height: 48px; border-radius: 50%; background: #fff; display: grid; place-items: center; }
.url { flex: 1; margin-left: 16px; font-size: 28px; color: #1f1f1f; white-space: nowrap; letter-spacing: .1px; }
.url em { color: #55575b; }
.star { width: 30px; height: 30px; }
.puzzle { width: 34px; height: 34px; margin-left: 37px; }
.vsep { width: 4px; height: 32px; margin-left: 33px; border-radius: 2px; background: #d3e1fb; }
.queue { width: 32px; height: 26px; margin-left: 38px; }
.avatar { width: 40px; height: 40px; margin-left: 35px; border-radius: 50%; background: #7b8f9a; color: #fff; font-size: 20px; line-height: 40px; text-align: center; }
.relaunch {
  width: 318px;
  height: 68px;
  margin-left: auto;
  display: flex;
  align-items: center;
  justify-content: space-between;
  padding: 0 28px 0 24px;
  border-radius: 34px;
  background: #d6e1fb;
  color: #0a1c47;
  font-size: 26px;
  font-weight: 500;
  white-space: nowrap;
}
.relaunch span { letter-spacing: -.2px; }

/* page */
.page { flex: 1; display: flex; flex-direction: column; background: #f9fafc; min-height: 0; }
.headers { height: 354px; flex: none; background: #fff; border-bottom: 2px solid #e8eaee; box-shadow: 0 2px 6px rgba(0, 0, 0, .05); }
.app-header {
  height: 176px;
  display: grid;
  grid-template-columns: 79px 259px 253px 247px 261px 259px 238px 214px 429px 119px 64px;
  align-items: center;
  padding-left: 297px;
}
.logo { width: 60px; height: 60px; }
.brand {
  justify-self: start;
  width: 180px;
  padding-top: 3px;
  font-size: 40px;
  line-height: 56px;
  font-weight: 600;
  letter-spacing: -1.450px;
  color: transparent;
  background: linear-gradient(90deg, #49a3e6 0, #3f6fe0 150px);
  -webkit-background-clip: text;
  background-clip: text;
}
.link { display: flex; align-items: center; gap: 8px; font-size: 32px; line-height: 48px; color: #4b5563; white-space: nowrap; letter-spacing: -.850px; }
.link span { padding-top: 3px; }
.link svg, .sponsor svg, .theme svg, .cal { fill: none; stroke: currentColor; stroke-width: 2; stroke-linecap: round; stroke-linejoin: round; }
.link svg { width: 40px; height: 40px; }
.link.current { color: #3182ce; }
.sponsor {
  width: 398px;
  height: 72px;
  display: flex;
  align-items: center;
  justify-content: space-between;
  padding: 0 25px 0 24px;
  border-radius: 12px;
  background: linear-gradient(90deg, #dd5499, #dd5148);
  color: #fff;
  font-size: 28px;
  font-weight: 500;
  white-space: nowrap;
}
.sponsor span { padding-top: 1px; letter-spacing: -.3px; }
.sponsor svg, .theme svg { width: 32px; height: 32px; }
.theme { width: 80px; height: 80px; display: grid; place-items: center; border: 2px solid #e2e8f0; border-radius: 12px; background: #fafafa; color: #020817; }
.user { width: 64px; height: 64px; border-radius: 50%; background: #f1f5f9; color: #020817; font-size: 28px; font-weight: 500; line-height: 65px; text-align: center; letter-spacing: -.5px; }

.content { width: 860px; flex: 1; margin: 0 auto; padding-top: 63px; }
h1 { font-size: 60px; line-height: 72px; font-weight: 700; letter-spacing: -1.800px; color: #111827; }
.sub { margin-top: 16px; font-size: 32px; line-height: 48px; color: #4b5563; letter-spacing: -.750px; white-space: nowrap; }
.section-head { margin-top: 64px; display: flex; justify-content: space-between; align-items: center; }
.section-head h2 { font-size: 48px; line-height: 64px; font-weight: 700; letter-spacing: -1.650px; color: #111827; }
.section-head span { font-size: 28px; color: #4b5563; letter-spacing: -.4px; }
.card {
  margin-top: 47px;
  height: 380px;
  padding-top: 64px;
  display: flex;
  flex-direction: column;
  align-items: center;
  border: 2px solid #e2e8f0;
  border-radius: 16px;
  background: #fff;
  box-shadow: 0 2px 4px rgba(0, 0, 0, .05);
}
.cal { width: 96px; height: 96px; color: #9ca3af; }
.card h3 { margin-top: 32px; font-size: 36px; line-height: 56px; font-weight: 500; letter-spacing: -.950px; color: #111827; }
.card p { margin-top: 17px; font-size: 32px; line-height: 48px; color: #4b5563; letter-spacing: -.640px; white-space: nowrap; }
.foot {
  height: 90px;
  flex: none;
  display: flex;
  justify-content: flex-end;
  gap: 32.500px;
  padding: 50px 296px 0 0;
  border-top: 2px solid #e3e5ea;
  background: linear-gradient(#f3f4f6 0, #f0f1f3 50%, #dedfe2 100%);
  font-size: 32px;
  line-height: 48px;
  letter-spacing: -.850px;
  color: #4b5563;
}
.bubble {
  position: absolute;
  left: 0;
  bottom: 0;
  width: 1110px;
  height: 43px;
  padding-left: 10px;
  border: solid #a3a7ae;
  border-width: 2px 2px 0 0;
  border-radius: 0 9px 0 0;
  background: linear-gradient(#d6e1fb, #c7d2ee);
  box-shadow: 0 0 30px rgba(0, 0, 0, .3);
  font-size: 24px;
  line-height: 41px;
  letter-spacing: .07px;
  color: #43454a;
  white-space: nowrap;
}

/* windows peeking out below the browser */
.behind { display: flex; height: 87px; align-items: stretch; }
.win-edge { width: 34px; height: 16px; background: #100e22; border-radius: 0 0 0 12px; }
.win-dark { width: 480px; background: linear-gradient(#1c1c1c, #2d2d2d); border-radius: 0 0 0 20px; }
.win-gray { flex: 1; background: linear-gradient(90deg, transparent 2340px, rgba(255, 255, 255, .45) 2510px), linear-gradient(#9b9b9b 0, #a3a3a3 30px, #dedede 87px); }
.toast { width: 576px; height: 50px; margin-left: 743px; background: #1f1f1f; text-align: center; }
.toast span { display: block; margin-top: -23px; font-size: 25px; line-height: 36px; color: #aaa; letter-spacing: -.2px; }

/* dock */
.dock {
  position: absolute;
  z-index: 2;
  left: 97px;
  top: 1818px;
  width: 2831px;
  height: 136px;
  display: flex;
  align-items: flex-start;
  gap: 27.200px;
  padding: 18px 0 0 17px;
  border: 2px solid rgba(255, 255, 255, .22);
  border-radius: 46px;
  background:
    linear-gradient(rgba(200, 200, 200, .25), transparent 60%),
    linear-gradient(90deg, #5f6960 0, #646a63 280px, #776a65 400px, #96867b 600px, #968880 850px, #8e917f 1150px, #868c80 1400px, #868f7c 1750px, #8b8c86 2050px, #8f9480 2350px, #b29a7c 2600px, #a8968a 2760px, #8f8178 2831px);
}
.app { position: relative; width: 86px; height: 114px; flex: none; }
.app svg { font-family: Inter, sans-serif; }
.app > svg { width: 86px; height: 86px; filter: drop-shadow(0 2px 2px rgba(0, 0, 0, .3)); }
.app.on::after { content: ""; position: absolute; left: 38px; bottom: 2px; width: 8px; height: 8px; border-radius: 50%; background: #060a05; }
.petals rect { mix-blend-mode: multiply; }
.badge { position: absolute; left: 57px; top: -11px; width: 42px; height: 42px; border-radius: 50%; background: #e65241; color: #fff; font-size: 22px; font-weight: 500; line-height: 42px; text-align: center; box-shadow: 0 0 8px rgba(0, 0, 0, .3); }
.dsep { width: 3px; height: 100px; margin: -2px 8px 0 14px; background: rgba(50, 50, 45, .5); }
```
